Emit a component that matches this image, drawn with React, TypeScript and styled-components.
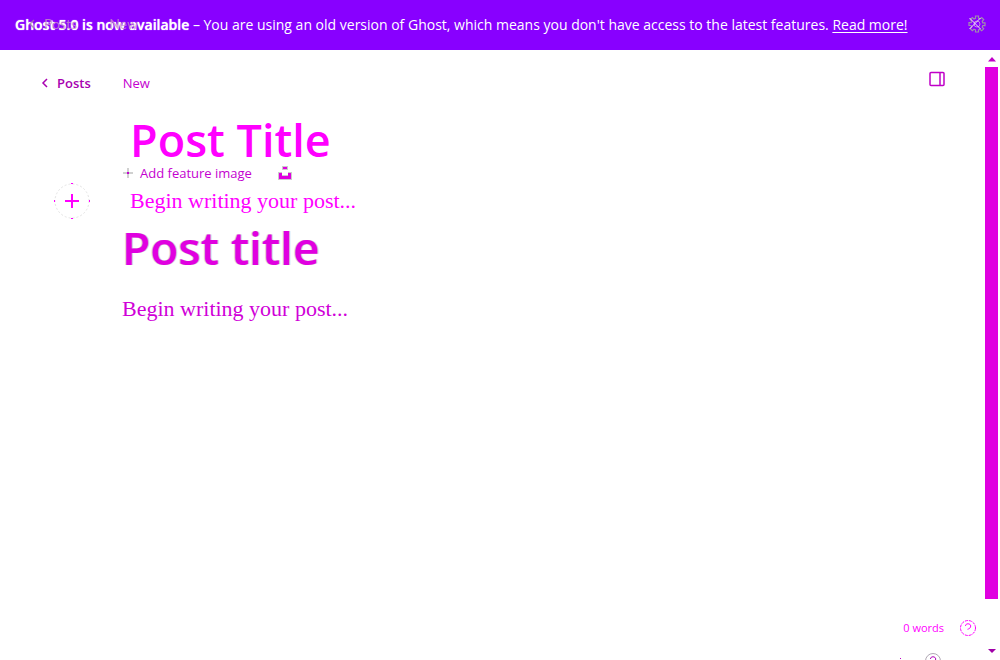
import React from "react";
import styled, { createGlobalStyle } from "styled-components";

const sans = '"Open Sans", "Noto Sans", sans-serif';
const compact = 'Lato, "Open Sans", sans-serif';
const serif = '"Liberation Serif", serif';

const GlobalStyle = createGlobalStyle`
  * { box-sizing: border-box; }
  body { margin: 0; background: #fff; font-family: ${sans}; }
  button, input { font: inherit; border: 0; padding: 0; background: none; }
  button { cursor: pointer; }
  svg { display: block; }
`;

const Page = styled.div`
  display: flex;
  flex-direction: column;
  height: 100vh;
  overflow: hidden;
`;

const Banner = styled.aside`
  position: relative;
  display: flex;
  align-items: center;
  justify-content: space-between;
  flex: none;
  height: 50px;
  padding: 0 14px 0 15px;
  background: #8800ff;
  color: #fff;
`;

const BannerText = styled.p`
  margin: 0;
  font-size: 14px;
  line-height: 20px;
  white-space: nowrap;

  strong {
    font-weight: 600;
    text-shadow: 0 0 1px #fff;
  }
`;

const BannerLink = styled.a`
  color: #fff;
  text-decoration: underline;
  text-underline-offset: 2px;
`;

const Underlay = styled.div`
  position: absolute;
  left: 27px;
  top: 14px;
  display: flex;
  gap: 32px;
  font-family: ${compact};
  font-size: 14px;
  line-height: 20px;
  color: #c890c8;
  opacity: 0.8;
`;

const UnderlayPosts = styled.span`
  display: flex;
  align-items: center;
  gap: 8px;
`;

const Workspace = styled.div`
  display: flex;
  flex: 1;
  min-height: 0;
`;

const Editor = styled.main`
  display: flex;
  flex-direction: column;
  flex: 1;
  min-width: 0;
`;

const Header = styled.header`
  display: flex;
  align-items: flex-start;
  justify-content: space-between;
  padding: 21px 40px 0;
  height: 64px;
`;

const Crumbs = styled.nav`
  display: flex;
  gap: 32px;
  padding-top: 2px;
  font-size: 13px;
  line-height: 20px;
  color: #c400d0;
`;

const BackLink = styled.a`
  display: flex;
  align-items: center;
  gap: 8px;
  color: #a800b0;
  font-weight: 600;
  text-decoration: none;
`;

const Canvas = styled.section`
  display: flex;
  flex-direction: column;
  flex: 1;
  padding: 0 40px 0 122px;
`;

const TitleInput = styled.input`
  width: 100%;
  height: 50px;
  padding-left: 8px;
  font-size: 45px;
  font-weight: 600;
  outline: none;
  color: #ff00ff;
  &::placeholder { color: #ff00ff; opacity: 1; }
`;

const FeatureRow = styled.div`
  display: flex;
  align-items: center;
  gap: 26px;
  height: 18px;
`;

const FeatureButton = styled.button`
  display: flex;
  align-items: center;
  gap: 6px;
  font-size: 13px;
  line-height: 18px;
  color: #c400d0;
`;

const BodyRow = styled.div`
  display: flex;
  align-items: center;
  gap: 32px;
  height: 36px;
  margin: 1px 0 0 -68px;
`;

const AddCard = styled.button`
  flex: none;
  width: 36px;
  height: 36px;
`;

const BodyInput = styled.input`
  flex: 1;
  padding-left: 8px;
  font-family: ${serif};
  font-size: 22px;
  outline: none;
  color: #ff00ff;
  &::placeholder { color: #ff00ff; opacity: 1; }
`;

const Heading = styled.h1`
  margin: 0;
  font-size: 46px;
  line-height: 56px;
  font-weight: 600;
  color: #e000e0;
  text-shadow: 1px 0 #d4ccd4, -1px 0 #d4ccd4;
`;

const Paragraph = styled.p`
  margin: 20px 0 0;
  font-family: ${serif};
  font-size: 22px;
  line-height: 28px;
  color: #d000d8;
`;

const Footer = styled.footer`
  display: flex;
  flex-direction: column;
  align-items: flex-end;
  gap: 16px;
  height: 41px;
  overflow: hidden;
`;

const StatusRow = styled.div`
  display: flex;
  align-items: center;
  gap: 16px;
  padding-right: 9px;
  flex: none;
  font-size: 11px;
  line-height: 18px;
  color: #ff00ff;
`;

const ClippedRow = styled.div`
  display: flex;
  gap: 22px;
  padding-right: 44px;
  flex: none;
`;

const Scrollbar = styled.div`
  display: flex;
  flex-direction: column;
  align-items: center;
  flex: none;
  width: 15px;
  padding: 7px 2px 7px 0;
`;

const Thumb = styled.div`
  width: 13px;
  margin: 5px 0 50px;
  flex: 1;
  background: #e000e0;
`;

const Chevron = ({ color }: { color: string }) => (
  <svg width="9" height="10" viewBox="0 0 9 10" fill="none" stroke={color} strokeWidth="1.5">
    <path d="M7 1L3 5l4 4" />
  </svg>
);

const Help = ({ color, ring = color, dash }: { color: string; ring?: string; dash?: string }) => (
  <svg width="16" height="16" viewBox="0 0 16 16" fill="none" stroke={color}>
    <circle cx="8" cy="8" r="7.5" stroke={ring} strokeDasharray={dash} />
    <path d="M5.500 6c0-1.500 1-2.200 2.500-2.200s2.700.8 2.700 2.200c0 1.800-1.200 2.800-3.200 3.300" />
  </svg>
);

export default function App() {
  return (
    <Page>
      <GlobalStyle />
      <Banner>
        <Underlay aria-hidden="true">
          <UnderlayPosts>
            <Chevron color="#a080a8" />
            <span>Posts</span>
          </UnderlayPosts>
          <span>New</span>
        </Underlay>
        <BannerText>
          <strong>Ghost 5.0 is now available</strong> – You are using an old version of Ghost, which
          means you don't have access to the latest features.{" "}
          <BannerLink href="#release">Read more!</BannerLink>
        </BannerText>
        <button aria-label="Close">
          <svg width="18" height="20" viewBox="0 0 18 20" fill="none">
            <path
              stroke="#a08cae"
              strokeWidth="1.200"
              d="M7.500 1h3v2.200l1.500.7L13.700 2.500l2 2-1.500 1.800.6 1.500H17v2.800h-2.200l-.6 1.500 1.500 1.700-2 2-1.700-1.500-1.500.6V17h-3v-2.200L6 14.200l-1.700 1.500-2-2 1.500-1.700-.6-1.500H1V7.700h2.200l.6-1.500L2.300 4.500l2-2L6 4l1.500-.7z"
            />
            <circle cx="9" cy="9" r="3" stroke="#c68ad8" />
            <path stroke="#f0dcff" d="M1.500 3l11 11M12.500 3l-11 11" />
          </svg>
        </button>
      </Banner>
      <Workspace>
        <Editor>
          <Header>
            <Crumbs>
              <BackLink href="#posts">
                <Chevron color="#a800b0" />
                Posts
              </BackLink>
              <span>New</span>
            </Crumbs>
            <button aria-label="Settings">
              <svg width="16" height="16" viewBox="0 0 16 16" fill="none" stroke="#c000c8" strokeWidth="1.500">
                <rect x="1" y="1.500" width="14" height="13" rx="1" />
                <path d="M11 1.500v13" />
              </svg>
            </button>
          </Header>
          <Canvas>
            <TitleInput aria-label="Post Title" placeholder="Post Title" />
            <FeatureRow>
              <FeatureButton>
                <svg width="12" height="12" viewBox="0 0 12 12" shapeRendering="crispEdges">
                  <path d="M5 1h2v10H5zM1 5h10v2H1z" fill="#d0d0d0" />
                  <path d="M5 5h2v2H5z" fill="#c400d0" />
                </svg>
                Add feature image
              </FeatureButton>
              <button aria-label="Unsplash">
                <svg width="14" height="14" viewBox="0 0 14 14">
                  <path d="M4 0h6v4H4zM0 6h4v3h6V6h4v8H0z" fill="#ccc" />
                  <path d="M5 1h4v2H5zM1 7h3v3h6V7h3v6H1z" fill="#e000e0" />
                </svg>
              </button>
            </FeatureRow>
            <BodyRow>
              <AddCard aria-label="Add a card">
                <svg width="36" height="36" viewBox="0 0 36 36" fill="none">
                  <circle cx="18" cy="18" r="17" stroke="#e4e4e4" strokeDasharray="2 2" />
                  <path d="M17 .5h2M17 35.500h2M.5 17v2M35.500 17v2" stroke="#ff00ff" />
                  <path d="M18 11v14M11 18h14" stroke="#ff00ff" strokeWidth="2" />
                </svg>
              </AddCard>
              <BodyInput aria-label="Post body" placeholder="Begin writing your post..." />
            </BodyRow>
            <Heading>Post title</Heading>
            <Paragraph>Begin writing your post...</Paragraph>
          </Canvas>
          <Footer>
            <StatusRow>
              0 words
              <button aria-label="Help">
                <Help color="#ff00ff" dash="3 1" />
              </button>
            </StatusRow>
            <ClippedRow aria-hidden="true">
              <svg width="4" height="6" viewBox="0 0 4 6">
                <path d="M1 5h1v1H1z" fill="#c000c8" />
              </svg>
              <Help color="#b000b8" ring="#b0a8b4" />
            </ClippedRow>
          </Footer>
        </Editor>
        <Scrollbar aria-hidden="true">
          <svg width="8" height="5" viewBox="0 0 8 5">
            <path d="M4 0l4 4.500H0z" fill="#c000c8" />
          </svg>
          <Thumb />
          <svg width="8" height="4" viewBox="0 0 8 4">
            <path d="M0 0h8L4 4z" fill="#a000a8" />
          </svg>
        </Scrollbar>
      </Workspace>
    </Page>
  );
}
